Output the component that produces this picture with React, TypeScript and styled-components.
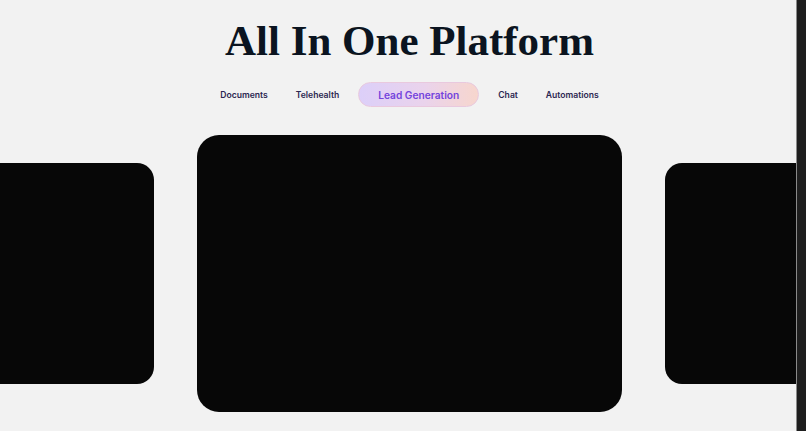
import React from "react";
import styled, { createGlobalStyle } from "styled-components";

const tabs = ["Documents", "Telehealth", "Lead Generation", "Chat", "Automations"];

const GlobalStyle = createGlobalStyle`
  html, body {
    margin: 0;
    padding: 0;
    background: #f2f2f2;
    overflow: hidden;
  }
`;

const App: React.FC = () => {
  const active = "Lead Generation";

  return (
    <>
      <GlobalStyle />
      <Page>
        <Main>
          <Stage>
            <Title>All In One Platform</Title>
            <Tabs>
              {tabs.map((t) => (
                <Tab key={t} $active={t === active}>
                  {t}
                </Tab>
              ))}
            </Tabs>
            <Carousel>
              <Card $side />
              <Card />
              <Card $side />
            </Carousel>
          </Stage>
        </Main>
        <Scrollbar />
      </Page>
    </>
  );
};

const Page = styled.div`
  display: flex;
  width: 806px;
  height: 431px;
`;

const Main = styled.div`
  flex: 0 0 796px;
  overflow: hidden;
  background: #f2f2f2;
`;

const Stage = styled.div`
  width: 819px;
  display: flex;
  flex-direction: column;
  align-items: center;
`;

const Title = styled.h1`
  margin: 19px 0 0;
  font-family: "Liberation Serif", "Times New Roman", serif;
  font-weight: 700;
  font-size: 43px;
  line-height: 43px;
  color: #0b1420;
`;

const Tabs = styled.nav`
  display: flex;
  align-items: center;
  margin-top: 20px;
  height: 25px;
`;

const Tab = styled.span<{ $active?: boolean }>`
  display: flex;
  align-items: center;
  height: 25px;
  box-sizing: border-box;
  font-family: Inter, "Liberation Sans", sans-serif;
  border-radius: 999px;
  white-space: nowrap;
  ${({ $active }) =>
    $active
      ? `
    margin: 0 5px;
    padding: 0 19px;
    font-size: 10.2px;
    font-weight: 600;
    color: #7444dc;
    background: linear-gradient(90deg, #dccff9 0%, #ead3ec 55%, #f7d6cd 100%);
    border: 1px solid #e9c9de;
  `
      : `
    padding: 0 14px;
    font-size: 8.6px;
    font-weight: 600;
    color: #2b2650;
  `}
`;

const Carousel = styled.div`
  display: flex;
  align-items: center;
  justify-content: center;
  gap: 43px;
  width: 100%;
  margin-top: 28px;
  height: 277px;
`;

const Card = styled.div<{ $side?: boolean }>`
  flex: 0 0 ${({ $side }) => ($side ? "340px" : "425px")};
  height: ${({ $side }) => ($side ? "221px" : "277px")};
  border-radius: ${({ $side }) => ($side ? "17px" : "22px")};
  background: #070707;
`;

const Scrollbar = styled.div`
  flex: 0 0 10px;
  background: #1e1e1e;
  border-left: 1px solid #8a8a8a;
  box-sizing: border-box;
`;

export default App;
